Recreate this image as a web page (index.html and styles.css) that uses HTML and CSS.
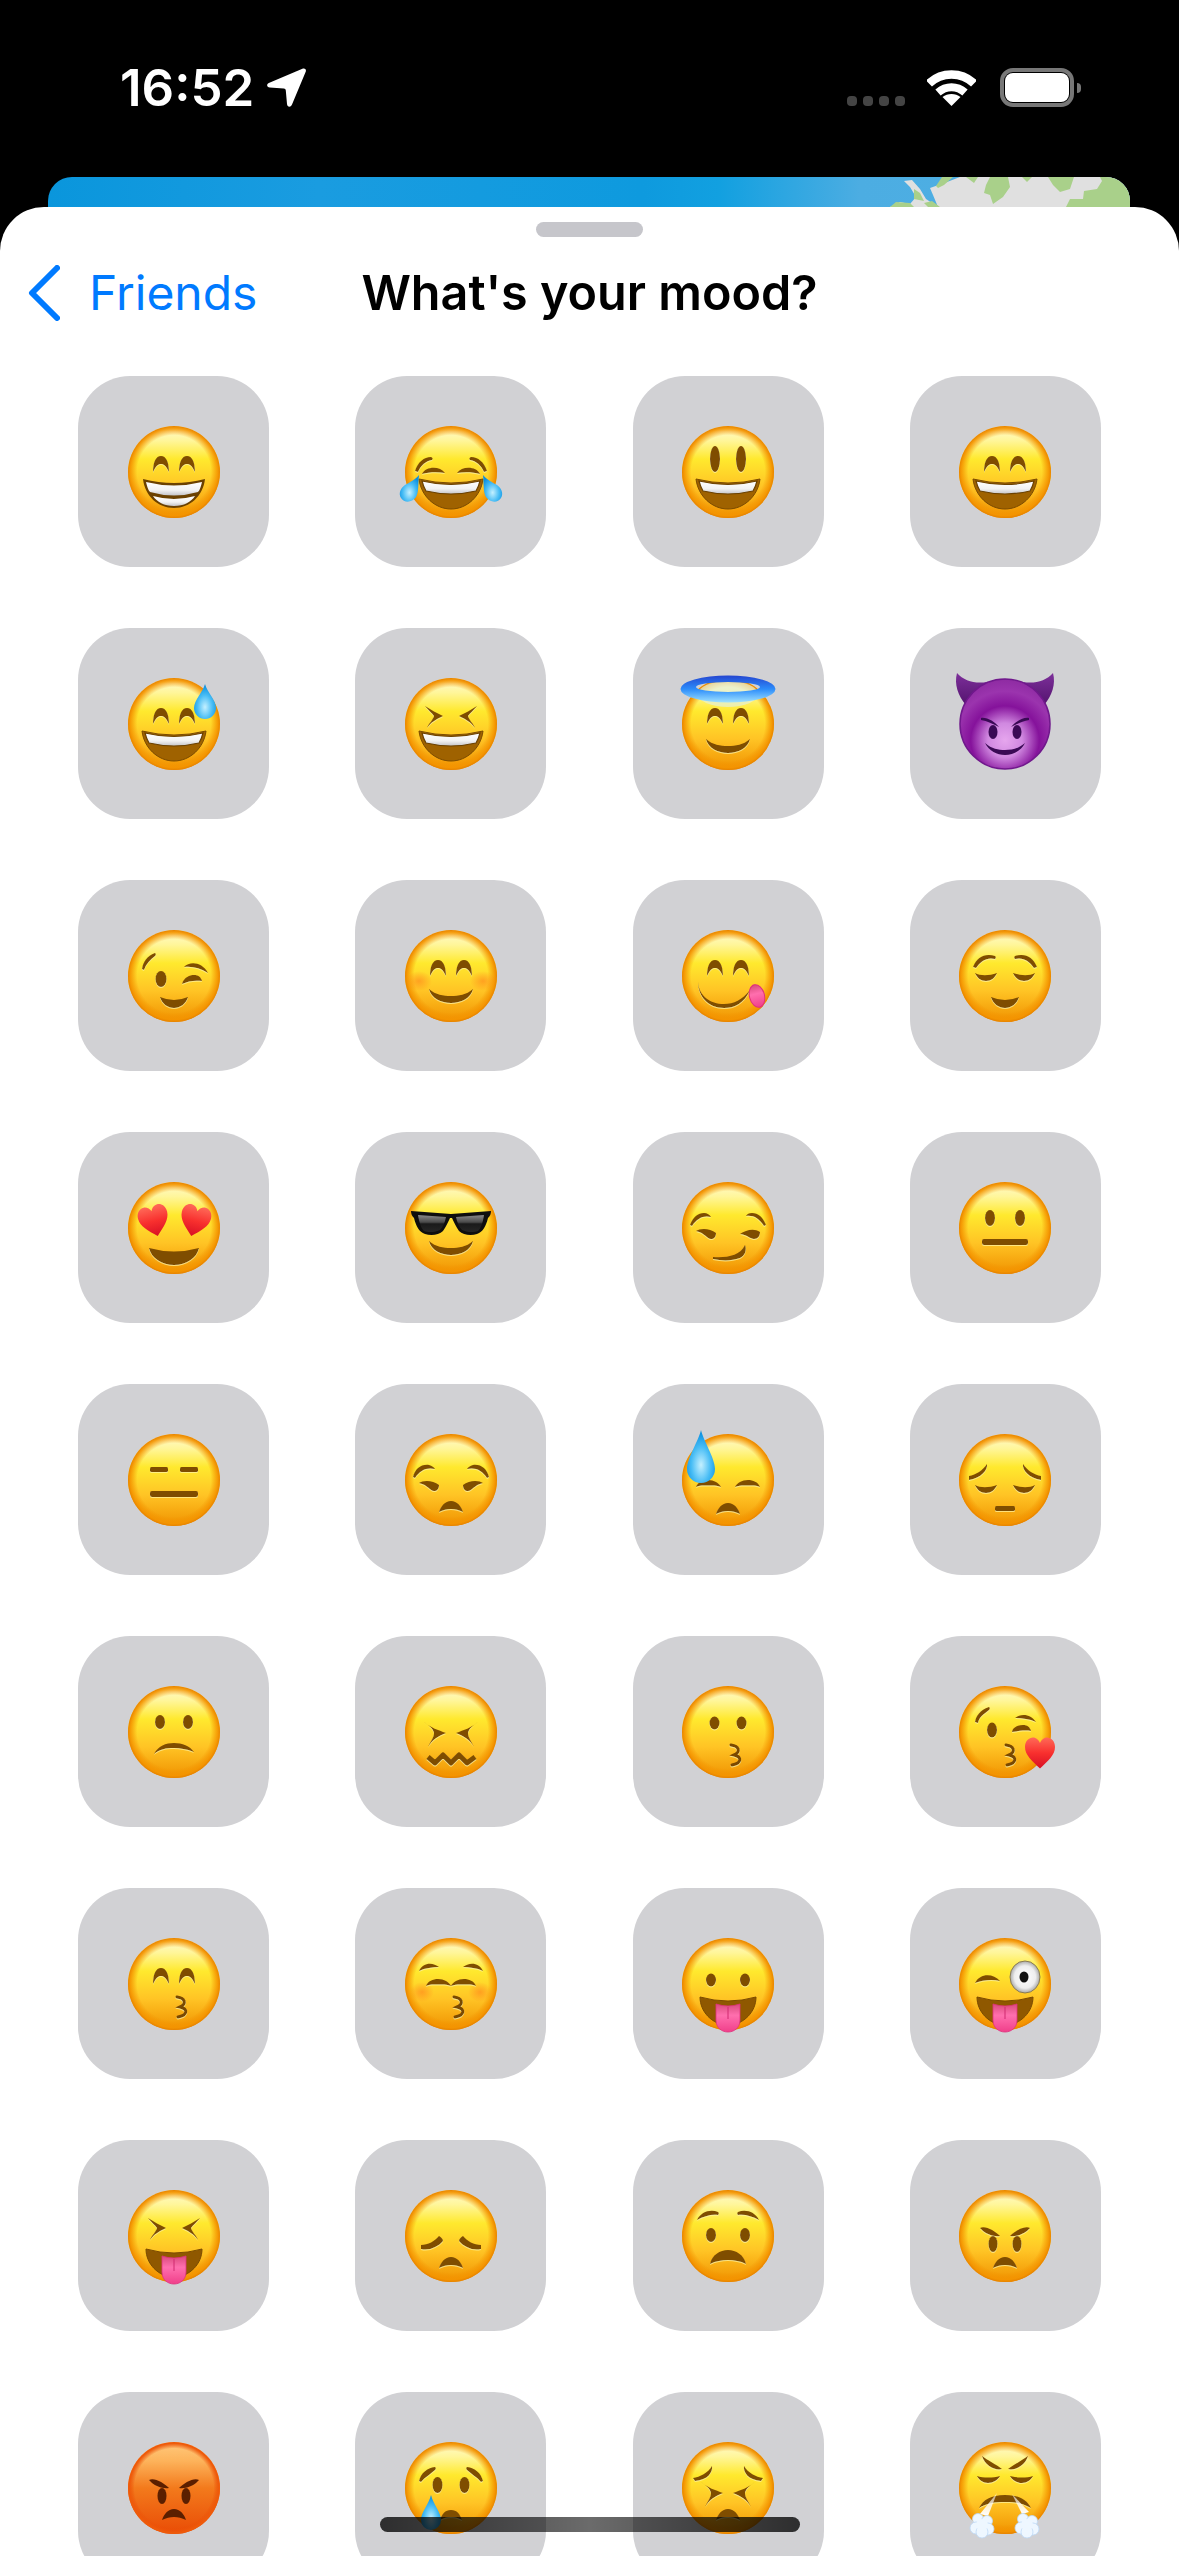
FILE: index.html

```html
<!DOCTYPE html>
<html lang="en">
<head>
    <meta charset="UTF-8">
    <meta name="viewport" content="width=device-width, initial-scale=1.0">
    <title>What's your mood?</title>
    <link rel="stylesheet" href="styles.css">
</head>
<body>
    <!-- shared emoji parts, 120 x 120 box, face centred on 60,60 -->
    <svg class="defs" width="0" height="0" aria-hidden="true">
        <defs>
            <linearGradient id="skin" x1="0" y1="0" x2="0" y2="1">
                <stop offset="0" stop-color="#ffe27a"/>
                <stop offset=".06" stop-color="#fff8bc"/>
                <stop offset=".16" stop-color="#fff69a"/>
                <stop offset=".36" stop-color="#ffe92e"/>
                <stop offset=".66" stop-color="#ffc425"/>
                <stop offset="1" stop-color="#f09200"/>
            </linearGradient>
            <radialGradient id="rim">
                <stop offset=".8" stop-color="#f39200" stop-opacity="0"/>
                <stop offset=".95" stop-color="#f49400" stop-opacity=".9"/>
                <stop offset="1" stop-color="#e68200"/>
            </radialGradient>
            <linearGradient id="teeth" x1="0" y1="0" x2="0" y2="1">
                <stop offset="0" stop-color="#fff"/>
                <stop offset=".6" stop-color="#f2f2f2"/>
                <stop offset="1" stop-color="#c4c4c8"/>
            </linearGradient>
            <radialGradient id="water" cx=".5" cy=".66" r=".62">
                <stop offset="0" stop-color="#c4f0ff"/>
                <stop offset=".55" stop-color="#48bdf5"/>
                <stop offset="1" stop-color="#0a8fe0"/>
            </radialGradient>
            <linearGradient id="tongue" x1="0" y1="0" x2="0" y2="1">
                <stop offset="0" stop-color="#d94a7c"/>
                <stop offset=".4" stop-color="#ff6fae"/>
                <stop offset="1" stop-color="#f03f8a"/>
            </linearGradient>
            <linearGradient id="love" x1="0" y1="0" x2="0" y2="1">
                <stop offset="0" stop-color="#ff6a58"/>
                <stop offset=".5" stop-color="#f8302e"/>
                <stop offset="1" stop-color="#d80f24"/>
            </linearGradient>
            <radialGradient id="blush">
                <stop offset="0" stop-color="#ff7a1a" stop-opacity=".55"/>
                <stop offset="1" stop-color="#ff7a1a" stop-opacity="0"/>
            </radialGradient>
            <radialGradient id="devil" cx=".5" cy=".68" r=".68">
                <stop offset="0" stop-color="#e6a6ee"/>
                <stop offset=".28" stop-color="#d088e0"/>
                <stop offset=".56" stop-color="#85129b"/>
                <stop offset=".8" stop-color="#9b34ae"/>
                <stop offset="1" stop-color="#8e2ba2"/>
            </radialGradient>
            <linearGradient id="horn" x1="0" y1="0" x2="0" y2="1">
                <stop offset="0" stop-color="#7d2f9a"/>
                <stop offset="1" stop-color="#54146f"/>
            </linearGradient>
            <linearGradient id="rage" x1="0" y1="0" x2="0" y2="1">
                <stop offset="0" stop-color="#ffc97c"/>
                <stop offset=".2" stop-color="#fdb45c"/>
                <stop offset=".5" stop-color="#f37a1c"/>
                <stop offset="1" stop-color="#e94c06"/>
            </linearGradient>
            <radialGradient id="ragerim">
                <stop offset=".86" stop-color="#ea4c06" stop-opacity="0"/>
                <stop offset=".97" stop-color="#ee5a0a"/>
            </radialGradient>
            <linearGradient id="halo" x1="0" y1="0" x2="0" y2="1">
                <stop offset="0" stop-color="#2546d0"/>
                <stop offset=".5" stop-color="#2c8cfa"/>
                <stop offset="1" stop-color="#9fe2ff"/>
            </linearGradient>
            <linearGradient id="lens" x1="0" y1="0" x2="0" y2="1">
                <stop offset="0" stop-color="#8a8a8a"/>
                <stop offset=".42" stop-color="#4a4a4a"/>
                <stop offset=".52" stop-color="#1a1a1a"/>
                <stop offset="1" stop-color="#262626"/>
            </linearGradient>
            <radialGradient id="ball">
                <stop offset="0" stop-color="#fff"/>
                <stop offset=".7" stop-color="#eee"/>
                <stop offset="1" stop-color="#a9a9a9"/>
            </radialGradient>
            <linearGradient id="jet" x1="0" y1="0" x2="0" y2="1">
                <stop offset="0" stop-color="#fff" stop-opacity=".5"/>
                <stop offset="1" stop-color="#fff"/>
            </linearGradient>
            <filter id="ink" x="-20%" y="-20%" width="140%" height="140%">
                <feDropShadow dx="0" dy="1" stdDeviation=".3" flood-color="#fff3a0" flood-opacity=".75"/>
            </filter>

            <g id="face">
                <circle cx="60" cy="60" r="46" fill="url(#skin)"/>
                <circle cx="60" cy="60" r="46" fill="url(#rim)"/>
            </g>

            <path id="arch" d="M-8 0C-8-10-5-16 0-16C5-16 8-10 8 0C5-6 3-8 0-8C-3-8-5-6-8 0Z"/>
            <g id="eyes-arch"><use href="#arch" x="47" y="60"/><use href="#arch" x="73" y="60"/></g>

            <path id="xl" d="M34 42C40 46 46 49 52 52C46 55 40 58 36 64C38 59 42 56 43 52C41 49 37 46 34 42Z"/>
            <g id="eyes-x"><use href="#xl"/><use href="#xl" transform="matrix(-1 0 0 1 120 0)"/></g>

            <path id="xt" d="M33 54C40 60 47 62 55 65C47 68 41 72 37 79C39 74 43 70 43 65C42 60 37 57 33 54Z"/>
            <g id="eyes-tall"><use href="#xt"/><use href="#xt" transform="matrix(-1 0 0 1 120 0)"/></g>

            <path id="ul" d="M30 57C35 60 44 60 52 57C50 62 46 65 41 65C36 65 32 62 30 57Z"/>
            <g id="eyes-u"><use href="#ul"/><use href="#ul" transform="matrix(-1 0 0 1 120 0)"/></g>

            <path id="fl" d="M28 67C30 62 35 60 40 60C46 60 51 63 53 67C48 65 44 65.500 40 65.500C36 65.500 32 65 28 67Z"/>
            <g id="eyes-flat"><use href="#fl"/><use href="#fl" transform="matrix(-1 0 0 1 120 0)"/></g>

            <path id="hl" d="M28 63C32 60 42 60 48 65C48 69 46 71 43 71C39 71 37 65 28 63Z"/>
            <path id="bl" d="M22 57C24 49 30 44 38 45C41 46 43 47 44 49C36 47 29 50 24 58Z"/>

            <g id="mouth-open">
                <path fill="#9f6200" stroke="#7a4a00" d="M28 67Q60 75 92 67C90 84 76 97 60 97C44 97 30 84 28 67Z"/>
                <path fill="url(#teeth)" stroke="#6b4100" stroke-width="1.2" d="M31 69Q60 76 89 69C88 73 87 76 85 79Q60 85 35 79C33 76 32 73 31 69Z"/>
            </g>
            <g id="mouth-tongue">
                <path fill="#8f5800" stroke="#7a4a00" d="M32 73Q60 81 88 73C88 88 76 100 60 102C44 100 32 88 32 73Z"/>
                <path fill="url(#tongue)" stroke="#e0307c" stroke-width=".8" d="M48 80Q60 84 72 80V96C72 104 66 108 60 108C54 108 48 104 48 96Z"/>
                <path fill="none" stroke="#d02a70" stroke-width="1" d="M60 83V95"/>
            </g>
            <path id="smile" d="M38 73C45 79 52 80 60 80C68 80 75 79 82 73C80 82 70 87 60 87C50 87 40 82 38 73Z"/>
            <path id="smile-small" d="M46 81Q60 87 74 81C72 88 66 92 60 92C54 92 48 88 46 81Z"/>
            <path id="frown" d="M48 92C50 86 54 81 60 81C66 81 70 86 72 92C68 90 64 89 60 89C56 89 52 90 48 92Z"/>
            <path id="kiss" fill="none" stroke="#7a4a00" stroke-width="3" stroke-linecap="round" d="M63 73C71 74 73 80 66 83C74 85 74 91 64 93"/>
            <path id="heart" d="M0 15.500C-8 8-15 2-15-6C-15-12-11-15.500-7-15.500C-4-15.500-1-13 0-10C1-13 4-15.500 7-15.500C11-15.500 15-12 15-6C15 2 8 8 0 15.500Z"/>
            <g id="puff" fill="#eef7ff" stroke="#bcd8f6" stroke-width=".8">
                <circle cx="-4" cy="-6" r="5.500"/><circle cx="5" cy="-4" r="5.500"/><circle cx="-6" cy="3" r="6"/>
                <circle cx="6" cy="4" r="6"/><circle cx="0" cy="7" r="6"/><circle cx="0" cy="0" r="6" stroke="none"/>
            </g>
        </defs>
    </svg>

    <header class="status-bar">
        <div class="status-left">
            <span class="clock">16:52</span>
            <svg class="location" viewBox="0 0 39 39" aria-hidden="true">
                <path fill="#fff" d="M36 .5C38 0 39.400 1.400 38.800 3.400L25 36.500C23.600 39.600 20.400 39.400 20 36L18.800 22.600C18.700 21.400 18 20.700 16.800 20.600L2.800 19.600C-.3 19.300-.8 16.300 1.800 15Z"/>
            </svg>
        </div>
        <div class="status-right">
            <div class="signal"><i></i><i></i><i></i><i></i></div>
            <svg class="wifi" viewBox="0 0 49 37" aria-hidden="true">
                <path fill="none" stroke="#fff" stroke-width="8.500" d="M2 14.500C14.500 2.500 34.500 2.500 47 14.500"/>
                <path fill="none" stroke="#fff" stroke-width="8" d="M11 23.500C19 16.500 30 16.500 38 23.500"/>
                <path fill="#fff" d="M24.500 37L15.500 28C20.500 24 28.500 24 33.500 28Z"/>
            </svg>
            <div class="battery"><div class="battery-shell"><div class="battery-level"></div></div><div class="battery-nub"></div></div>
        </div>
    </header>

    <div class="map-card">
        <svg class="map" viewBox="0 0 1082 30" preserveAspectRatio="none" aria-hidden="true">
            <path fill="#e0e0e0" d="M882 11L899 5L912 0H1082V30H842L852 25L862 27L868 20L862 10L856 4L864 3L872 12L878 22L890 30L885 18Z"/>
            <path fill="#a9d08a" d="M1052 0H1082V30H1018L1022 22L1035 22L1036 14L1049 12L1054 4Z"/>
            <path fill="#a9d08a" d="M942 0H960L962 10L955 20L945 27L942 18L936 16L938 8Z"/>
            <path fill="#a9d08a" d="M1000 0H1026L1022 12L1012 15L1005 8Z"/>
            <path fill="#a9d08a" d="M888 9L894 0H905L896 8L890 11Z"/>
            <path fill="#a9d08a" d="M918 0H930L926 6Z"/>
            <path fill="#a9d08a" d="M974 0H984L979 5Z"/>
            <path fill="#a9d08a" d="M866 12L872 16L876 24L866 22Z"/>
            <path fill="#a9d08a" d="M842 30L848 25L862 26L866 30Z"/>
            <path fill="#a9d08a" d="M876 26L884 24L892 30H880Z"/>
        </svg>
    </div>

    <main class="sheet">
        <div class="grabber"></div>
        <nav class="nav">
            <div class="back">
                <svg class="chevron" viewBox="0 0 32 56" aria-hidden="true">
                    <path fill="none" stroke="#007aff" stroke-width="6" stroke-linecap="round" stroke-linejoin="round" d="M29 3L4 28L29 53"/>
                </svg>
                <span>Friends</span>
            </div>
            <h1>What's your mood?</h1>
            <div></div>
        </nav>

        <div class="moods">
            <!-- beaming -->
            <div class="tile"><svg class="emoji" viewBox="0 0 120 120"><use href="#face"/><g class="ink" filter="url(#ink)"><use href="#eyes-arch"/></g><path fill="#6b4100" d="M29 67Q60 75 91 67C89 84 76 96 60 96C44 96 31 84 29 67Z"/><path fill="url(#teeth)" d="M32 70Q60 77 88 70C87 74 86 78 84 80Q60 87 36 80C34 78 33 74 32 70Z"/><path fill="url(#teeth)" d="M39 84Q60 90 81 84C77 90 70 94 60 94C50 94 43 90 39 84Z"/></svg></div>
            <!-- joy -->
            <div class="tile"><svg class="emoji" viewBox="0 0 120 120"><use href="#face"/><g class="ink" filter="url(#ink)"><path d="M24 59C27 50 33 45 40 45C42 46 42 47 41 48C35 49 30 53 27 60Z"/><path d="M96 59C93 50 87 45 80 45C78 46 78 47 79 48C85 49 90 53 93 60Z"/><path d="M31 62C35 54 49 54 54 61C47 60 38 60 31 62Z"/><path d="M89 62C85 54 71 54 66 61C73 60 82 60 89 62Z"/></g><use href="#mouth-open"/><path fill="url(#water)" d="M28 63C27 72 28 80 25 85C21 91 13 91 10 86C7 81 10 76 14 73C19 70 24 68 28 63Z"/><path fill="url(#water)" d="M92 63C93 72 92 80 95 85C99 91 107 91 110 86C113 81 110 76 106 73C101 70 96 68 92 63Z"/></svg></div>
            <!-- open smile -->
            <div class="tile"><svg class="emoji" viewBox="0 0 120 120"><use href="#face"/><g class="ink" filter="url(#ink)"><ellipse cx="47" cy="47" rx="5" ry="13"/><ellipse cx="73" cy="47" rx="5" ry="13"/></g><use href="#mouth-open"/></svg></div>
            <!-- smile -->
            <div class="tile"><svg class="emoji" viewBox="0 0 120 120"><use href="#face"/><g class="ink" filter="url(#ink)"><use href="#eyes-arch"/></g><use href="#mouth-open"/></svg></div>

            <!-- sweat smile -->
            <div class="tile"><svg class="emoji" viewBox="0 0 120 120"><use href="#face"/><g class="ink" filter="url(#ink)"><use href="#eyes-arch"/></g><use href="#mouth-open"/><path fill="url(#water)" d="M91 20C93 28 102 36 102 44A11 11 0 0 1 80 44C80 36 89 28 91 20Z"/></svg></div>
            <!-- laughing -->
            <div class="tile"><svg class="emoji" viewBox="0 0 120 120"><use href="#face"/><g class="ink" filter="url(#ink)"><use href="#eyes-x"/></g><use href="#mouth-open"/></svg></div>
            <!-- halo -->
            <div class="tile"><svg class="emoji" viewBox="0 0 120 120"><use href="#face"/><ellipse cx="60" cy="30" rx="30" ry="13" fill="#e4efd8" opacity=".7"/><g class="ink" filter="url(#ink)"><use href="#eyes-arch"/><use href="#smile" y="2"/></g><path fill="url(#halo)" fill-rule="evenodd" d="M12.500 25A47.500 13.500 0 1 1 107.500 25A47.500 13.500 0 1 1 12.500 25ZM28 23A32 5 0 1 0 92 23A32 5 0 1 0 28 23Z"/></svg></div>
            <!-- devil -->
            <div class="tile"><svg class="emoji" viewBox="0 0 120 120"><path fill="url(#horn)" d="M12 9C9 20 13 32 21 41L42 18C30 20 19 17 12 9Z"/><path fill="url(#horn)" d="M108 9C111 20 107 32 99 41L78 18C90 20 101 17 108 9Z"/><circle cx="60" cy="60" r="45" fill="url(#devil)" stroke="#70188c" stroke-width="1.500"/><g fill="#3a0a55"><ellipse cx="48" cy="68" rx="4.500" ry="7"/><ellipse cx="72" cy="68" rx="4.500" ry="7"/><path d="M36 54C42 53 50 58 54 63C48 60 42 57 36 56Z"/><path d="M84 54C78 53 70 58 66 63C72 60 78 57 84 56Z"/><path d="M40 79C47 85 53 86 60 86C67 86 73 85 80 79C76 87 68 91 60 91C52 91 44 87 40 79Z"/></g></svg></div>

            <!-- wink -->
            <div class="tile"><svg class="emoji" viewBox="0 0 120 120"><use href="#face"/><g class="ink" filter="url(#ink)"><path d="M28 53C29 46 33 40 41 37C42 38 42 39 41 40C36 44 32 48 30 54Z"/><ellipse cx="47" cy="63" rx="5.500" ry="8"/><path d="M70 51C76 45 88 46 94 57C86 52 78 50 70 51Z"/><path d="M68 68C70 61 76 59 80 59C84 59 87 61 88 65C81 64 74 65 68 68Z"/><use href="#smile-small"/></g></svg></div>
            <!-- blush smile -->
            <div class="tile"><svg class="emoji" viewBox="0 0 120 120"><use href="#face"/><ellipse cx="28" cy="65" rx="13" ry="10" fill="url(#blush)"/><ellipse cx="92" cy="65" rx="13" ry="10" fill="url(#blush)"/><g class="ink" filter="url(#ink)"><use href="#eyes-arch"/><use href="#smile"/></g></svg></div>
            <!-- yum -->
            <div class="tile"><svg class="emoji" viewBox="0 0 120 120"><use href="#face"/><g class="ink" filter="url(#ink)"><use href="#eyes-arch"/><path d="M30 66C31 80 42 88 56 88C66 88 74 84 82 74C76 88 66 92 56 92C40 92 30 80 30 66Z"/></g><ellipse cx="89" cy="80" rx="7.500" ry="11.500" transform="rotate(-14 89 80)" fill="url(#tongue)" stroke="#e0307c"/></svg></div>
            <!-- relieved -->
            <div class="tile"><svg class="emoji" viewBox="0 0 120 120"><use href="#face"/><g class="ink" filter="url(#ink)"><path d="M28 51C32 41 40 37 50 40C51 41 51 42 50 43C42 41 36 45 31 52Z"/><path d="M92 51C88 41 80 37 70 40C69 41 69 42 70 43C78 41 84 45 89 52Z"/><use href="#eyes-u"/><use href="#smile-small"/></g></svg></div>

            <!-- heart eyes -->
            <div class="tile"><svg class="emoji" viewBox="0 0 120 120"><use href="#face"/><g class="ink" filter="url(#ink)"><path d="M35 80Q60 87 85 80C83 90 72 97 60 97C48 97 37 90 35 80Z"/></g><use href="#heart" transform="translate(40 53) rotate(-14)" fill="url(#love)"/><use href="#heart" transform="translate(81 53) rotate(14)" fill="url(#love)"/></svg></div>
            <!-- sunglasses -->
            <div class="tile"><svg class="emoji" viewBox="0 0 120 120"><use href="#face"/><g class="ink" filter="url(#ink)"><use href="#smile"/></g><path fill="#0e0e0e" d="M20 43L60 46L100 43C100 46 99 48 97 50C95 58 92 64 86 66C80 68 72 67 68 63C65 59 63 54 61 50H59C57 54 55 59 52 63C48 67 40 68 34 66C28 64 25 58 23 50C21 48 20 46 20 43Z"/><path fill="url(#lens)" d="M27 47L55 49C54 54 52 59 49 62C45 64 38 65 33 63C30 60 28 54 27 47Z"/><path fill="url(#lens)" d="M93 47L65 49C66 54 68 59 71 62C75 64 82 65 87 63C90 60 92 54 93 47Z"/></svg></div>
            <!-- smirk -->
            <div class="tile"><svg class="emoji" viewBox="0 0 120 120"><use href="#face"/><g class="ink" filter="url(#ink)"><path d="M22 57C25 49 30 45 36 45C39 45 42 47 43 49C36 47 29 50 24 58Z"/><path d="M98 57C95 49 90 45 84 45C81 45 79 46 78 48C85 47 91 50 96 58Z"/><use href="#hl"/><path d="M72 66C78 62 86 60 92 64C92 68 90 71 86 71C82 71 80 67 72 66Z"/><path d="M45 89C58 90 72 88 77 77C79 82 77 88 72 90C64 93 54 93 45 91Z"/></g></svg></div>
            <!-- neutral -->
            <div class="tile"><svg class="emoji" viewBox="0 0 120 120"><use href="#face"/><g class="ink" filter="url(#ink)"><ellipse cx="45" cy="50" rx="5" ry="8"/><ellipse cx="75" cy="50" rx="5" ry="8"/><rect x="37" y="71" width="46" height="6" rx="2"/></g></svg></div>

            <!-- expressionless -->
            <div class="tile"><svg class="emoji" viewBox="0 0 120 120"><use href="#face"/><g class="ink" filter="url(#ink)"><rect x="36" y="47" width="18" height="5" rx="1.500"/><rect x="66" y="47" width="18" height="5" rx="1.500"/><rect x="36" y="71" width="48" height="6" rx="2"/></g></svg></div>
            <!-- unamused -->
            <div class="tile"><svg class="emoji" viewBox="0 0 120 120"><use href="#face"/><g class="ink" filter="url(#ink)"><use href="#bl"/><use href="#bl" transform="matrix(-1 0 0 1 120 0)"/><use href="#hl"/><use href="#hl" transform="matrix(-1 0 0 1 120 0)"/><use href="#frown"/></g></svg></div>
            <!-- downcast sweat -->
            <div class="tile"><svg class="emoji" viewBox="0 0 120 120"><use href="#face"/><g class="ink" filter="url(#ink)"><use href="#eyes-flat"/><use href="#frown" y="2"/></g><path fill="url(#water)" d="M33 10C35 20 47 38 47 49A14 14 0 0 1 19 49C19 38 31 20 33 10Z"/></svg></div>
            <!-- pensive -->
            <div class="tile"><svg class="emoji" viewBox="0 0 120 120"><use href="#face"/><g class="ink" filter="url(#ink)"><path d="M24 56C31 55 38 50 42 44C43 50 36 58 24 60Z"/><path d="M96 56C89 55 82 50 78 44C77 50 84 58 96 60Z"/><use href="#eyes-u" y="8"/><rect x="50" y="86" width="20" height="5" rx="1.500"/></g></svg></div>

            <!-- confused -->
            <div class="tile"><svg class="emoji" viewBox="0 0 120 120"><use href="#face"/><g class="ink" filter="url(#ink)"><ellipse cx="46" cy="50" rx="5" ry="7"/><ellipse cx="74" cy="50" rx="5" ry="7"/><path d="M40 82C44 74 52 71 60 71C68 71 76 74 80 80C72 77 66 76 60 76C52 76 46 77 40 82Z"/></g></svg></div>
            <!-- confounded -->
            <div class="tile"><svg class="emoji" viewBox="0 0 120 120"><use href="#face"/><g class="ink" filter="url(#ink)"><use href="#eyes-tall" y="-4"/><path fill="none" stroke="#7f4e00" stroke-width="5" stroke-linejoin="round" d="M37 85L44 91L52 83L60 91L68 83L76 91L84 85"/></g></svg></div>
            <!-- kissing -->
            <div class="tile"><svg class="emoji" viewBox="0 0 120 120"><use href="#face"/><g class="ink" filter="url(#ink)"><ellipse cx="46.500" cy="51" rx="5" ry="6.500"/><ellipse cx="73.500" cy="51" rx="5" ry="6.500"/><use href="#kiss"/></g></svg></div>
            <!-- blowing a kiss -->
            <div class="tile"><svg class="emoji" viewBox="0 0 120 120"><use href="#face"/><g class="ink" filter="url(#ink)"><path d="M30 50C31 44 35 38 44 35C45 36 45 37 44 38C39 42 34 45 33 51Z"/><ellipse cx="47" cy="58" rx="5" ry="7.500"/><path d="M70 46C76 41 86 42 91 50C84 47 78 46 70 46Z"/><path d="M67 60C68 55 73 53 78 53C82 53 85 55 86 59C80 58 74 59 67 60Z"/><use href="#kiss" x="-2"/></g><use href="#heart" transform="translate(95 81)" fill="url(#love)"/></svg></div>

            <!-- kissing smiling eyes -->
            <div class="tile"><svg class="emoji" viewBox="0 0 120 120"><use href="#face"/><g class="ink" filter="url(#ink)"><use href="#eyes-arch"/><use href="#kiss"/></g></svg></div>
            <!-- kissing closed eyes -->
            <div class="tile"><svg class="emoji" viewBox="0 0 120 120"><use href="#face"/><ellipse cx="31" cy="68" rx="12" ry="10" fill="url(#blush)"/><ellipse cx="89" cy="68" rx="12" ry="10" fill="url(#blush)"/><g class="ink" filter="url(#ink)"><path d="M28 47C32 38 42 38 48 43C42 43 34 44 28 47Z"/><path d="M92 47C88 38 78 38 72 43C78 43 86 44 92 47Z"/><use href="#fl" y="-5" x="7"/><use href="#fl" transform="matrix(-1 0 0 1 113 -5)"/><use href="#kiss"/></g></svg></div>
            <!-- tongue -->
            <div class="tile"><svg class="emoji" viewBox="0 0 120 120"><use href="#face"/><g class="ink" filter="url(#ink)"><ellipse cx="43" cy="56" rx="5" ry="6.500"/><ellipse cx="77" cy="56" rx="5" ry="6.500"/></g><use href="#mouth-tongue"/></svg></div>
            <!-- winking tongue -->
            <div class="tile"><svg class="emoji" viewBox="0 0 120 120"><use href="#face"/><g class="ink" filter="url(#ink)"><path d="M30 59C35 49 48 49 55 57C47 55 38 56 30 59Z"/></g><ellipse cx="80" cy="53" rx="15" ry="16" fill="url(#ball)" stroke="#8c7c50"/><ellipse cx="79" cy="53" rx="4.500" ry="5.500" fill="#111"/><use href="#mouth-tongue"/></svg></div>

            <!-- squinting tongue -->
            <div class="tile"><svg class="emoji" viewBox="0 0 120 120"><use href="#face"/><g class="ink" filter="url(#ink)"><use href="#eyes-x"/></g><use href="#mouth-tongue"/></svg></div>
            <!-- disappointed -->
            <div class="tile"><svg class="emoji" viewBox="0 0 120 120"><use href="#face"/><g class="ink" filter="url(#ink)"><path d="M30 69C37 69 44 65 48 60C50 61 52 63 52 65C47 71 38 75 30 73Z"/><path d="M90 69C83 69 76 65 72 60C70 61 68 63 68 65C73 71 82 75 90 73Z"/><use href="#frown"/></g></svg></div>
            <!-- worried -->
            <div class="tile"><svg class="emoji" viewBox="0 0 120 120"><use href="#face"/><g class="ink" filter="url(#ink)"><path d="M29 44C33 36 42 33 50 36C51 37 51 38 50 39C44 38 36 40 29 44Z"/><path d="M91 44C87 36 78 33 70 36C69 37 69 38 70 39C76 38 84 40 91 44Z"/><ellipse cx="43" cy="59" rx="5" ry="7"/><ellipse cx="77" cy="59" rx="5" ry="7"/><path d="M42 88C44 79 52 74 60 74C68 74 76 79 78 88C72 85 66 84 60 84C54 84 48 85 42 88Z"/></g></svg></div>
            <!-- angry -->
            <div class="tile"><svg class="emoji" viewBox="0 0 120 120"><use href="#face"/><g class="ink" filter="url(#ink)"><path d="M35 52C40 49 50 55 55 60C48 61 42 58 38 55Z"/><path d="M85 52C80 49 70 55 65 60C72 61 78 58 82 55Z"/><ellipse cx="48" cy="68" rx="4.500" ry="8"/><ellipse cx="72" cy="68" rx="4.500" ry="8"/><use href="#frown"/></g></svg></div>

            <!-- pouting -->
            <div class="tile"><svg class="emoji" viewBox="0 0 120 120"><circle cx="60" cy="60" r="46" fill="url(#rage)"/><circle cx="60" cy="60" r="46" fill="url(#ragerim)"/><g fill="#5b1f00"><path d="M35 52C40 49 50 55 55 60C48 61 42 58 38 55Z"/><path d="M85 52C80 49 70 55 65 60C72 61 78 58 82 55Z"/><ellipse cx="48" cy="68" rx="4.500" ry="8"/><ellipse cx="72" cy="68" rx="4.500" ry="8"/><use href="#frown"/></g></svg></div>
            <!-- crying -->
            <div class="tile"><svg class="emoji" viewBox="0 0 120 120"><use href="#face"/><g class="ink" filter="url(#ink)"><path d="M28 53C30 45 36 40 44 39C45 40 45 41 44 42C40 46 34 49 30 54Z"/><path d="M92 53C90 45 84 40 76 39C75 40 75 41 76 42C80 46 86 49 90 54Z"/><ellipse cx="46.500" cy="57" rx="5" ry="8"/><ellipse cx="73.500" cy="57" rx="5" ry="8"/><path d="M49 92C51 86 54 82 60 82C66 82 69 86 71 92C67 90 64 89 60 89C56 89 53 90 49 92Z"/></g><path fill="url(#water)" d="M40 67C42 76 50 84 50 92A10 10 0 0 1 30 92C30 84 38 76 40 67Z"/></svg></div>
            <!-- persevering -->
            <div class="tile"><svg class="emoji" viewBox="0 0 120 120"><use href="#face"/><g class="ink" filter="url(#ink)"><path d="M25 50C32 49 40 45 44 38C45 44 40 52 27 53Z"/><path d="M95 50C88 49 80 45 76 38C75 44 80 52 93 53Z"/><use href="#eyes-tall"/><use href="#frown"/></g></svg></div>
            <!-- steam -->
            <div class="tile"><svg class="emoji" viewBox="0 0 120 120"><use href="#face"/><g class="ink" filter="url(#ink)"><path d="M37 28C42 32 52 37 57 41C51 43 40 38 37 28Z"/><path d="M83 28C78 32 68 37 63 41C69 43 80 38 83 28Z"/><path d="M32 48C38 50 48 50 55 48C53 52 48 55 43 55C38 55 34 52 32 48Z"/><path d="M88 48C82 50 72 50 65 48C67 52 72 55 77 55C82 55 86 52 88 48Z"/><path d="M34 80C38 72 46 67 60 67C74 67 82 72 86 80C78 75 70 74 60 74C50 74 42 75 34 80Z"/></g><path fill="url(#jet)" d="M52 65L35 86L43 88Z"/><path fill="url(#jet)" d="M67 66L77 86L84 84Z"/><use href="#puff" transform="translate(37 97)"/><use href="#puff" transform="translate(82 97)"/></svg></div>
        </div>
    </main>

    <div class="home-indicator"></div>
</body>
</html>
```

FILE: styles.css

```css
* {
    box-sizing: border-box;
}
html, body {
    margin: 0;
    height: 2556px;
    overflow: hidden;
}
body {
    position: relative;
    display: flex;
    flex-direction: column;
    background-color: #000;
    font-family: Inter, "Liberation Sans", sans-serif;
}
.defs {
    display: block;
    height: 0;
}

/* status bar */
.status-bar {
    height: 177px;
    flex: none;
    display: flex;
    justify-content: space-between;
    align-items: flex-start;
    padding: 68px 98px 0 120px;
    color: #fff;
}
.status-left {
    display: flex;
    align-items: center;
    gap: 13px;
    height: 39px;
}
.clock {
    font-size: 51px;
    font-weight: 600;
    line-height: 39px;
}
.location {
    width: 39px;
    height: 39px;
}
.status-right {
    display: flex;
    align-items: flex-start;
}
.signal {
    display: flex;
    gap: 6px;
    margin: 28px 22px 0 0;
}
.signal i {
    width: 10px;
    height: 10px;
    border-radius: 4px;
    background-color: #444;
}
.wifi {
    width: 49px;
    height: 37px;
    margin: 1px 24px 0 0;
}
.battery {
    display: flex;
    align-items: center;
    gap: 3px;
}
.battery-shell {
    width: 74px;
    height: 39px;
    padding: 1px;
    border: 4px solid #777;
    border-radius: 13px;
}
.battery-level {
    width: 100%;
    height: 100%;
    border-radius: 8px;
    background-color: #fff;
}
.battery-nub {
    width: 4px;
    height: 10px;
    border-radius: 0 4px 4px 0;
    background-color: #777;
}

/* the map page behind the sheet */
.map-card {
    height: 30px;
    flex: none;
    margin: 0 49px 0 48px;
    border-radius: 24px 24px 0 0;
    overflow: hidden;
    background: linear-gradient(90deg, #0a96dc 0%, #1a9ce0 25%, #0e9ade 55%, #12a0e0 62%, #4cade2 75%, #50b0e4 100%);
}
.map {
    display: block;
    width: 100%;
    height: 100%;
}

/* sheet */
.sheet {
    flex: 1;
    min-height: 0;
    display: flex;
    flex-direction: column;
    border-radius: 44px 44px 0 0;
    background-color: #fff;
    overflow: hidden;
}
.grabber {
    width: 107px;
    height: 15px;
    flex: none;
    margin: 15px auto 0;
    border-radius: 7.5px;
    background-color: #c6c6cb;
}
.nav {
    height: 56px;
    flex: none;
    margin-top: 26px;
    padding: 0 28px;
    display: grid;
    grid-template-columns: 1fr auto 1fr;
    align-items: center;
}
.back {
    display: flex;
    align-items: center;
    gap: 29px;
    color: #007aff;
    font-size: 48px;
}
.chevron {
    width: 32px;
    height: 56px;
}
.nav h1 {
    margin: 0;
    color: #000;
    font-size: 48.5px;
    font-weight: 600;
}

/* emoji grid */
.moods {
    flex: none;
    padding: 57px 78px 0;
    display: grid;
    grid-template-columns: repeat(4, 191px);
    justify-content: space-between;
    row-gap: 61px;
}
.tile {
    height: 191px;
    display: flex;
    align-items: center;
    justify-content: center;
    border-radius: 52px;
    background-color: #d1d1d4;
}
.emoji {
    width: 120px;
    height: 120px;
    overflow: visible;
}
.ink {
    fill: #7f4e00;
}

.home-indicator {
    position: absolute;
    left: 380px;
    bottom: 24px;
    width: 420px;
    height: 15px;
    border-radius: 7.5px;
    background: linear-gradient(90deg, rgba(0, 0, 0, .78), rgba(0, 0, 0, .58) 50%, rgba(0, 0, 0, .78));
}
```
